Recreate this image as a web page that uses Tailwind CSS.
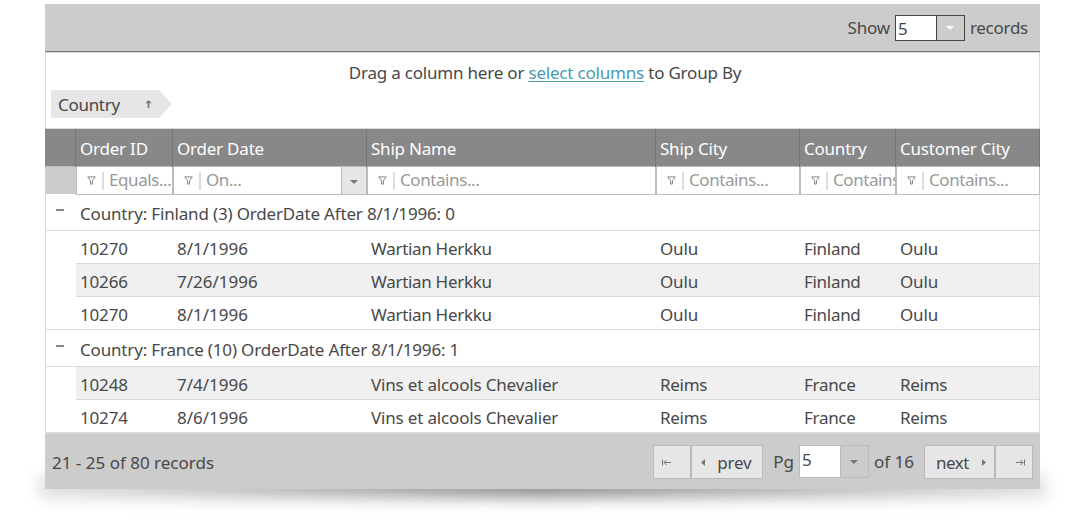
<!DOCTYPE html>
<html lang="en">
<head>
<meta charset="utf-8">
<title>Orders grid</title>
<script src="https://cdn.jsdelivr.net/npm/@tailwindcss/browser@4"></script>
</head>
<body class="w-[1080px] h-[520px] overflow-hidden bg-white font-['Noto_Sans','Open_Sans',sans-serif] text-[17px] leading-6 text-[#484848]">
<svg class="hidden">
  <symbol id="funnel" viewBox="0 0 10 9"><path d="M.8 .5H9.2L6 4.7V8.5H4V4.7Z" fill="none" stroke="#777" stroke-width="1"/></symbol>
  <symbol id="down" viewBox="0 0 8 4"><path d="M0 0H8L4 4Z" fill="currentColor"/></symbol>
</svg>
<div class="relative isolate ml-[45px] mt-1 w-[995px]">
  <div class="absolute -z-10 -left-[6px] -right-[6px] top-[472px] h-[21px] bg-[linear-gradient(to_right,rgb(0_0_0/0.13),rgb(0_0_0/0.24)_16%,rgb(0_0_0/0.48)_50%,rgb(0_0_0/0.24)_84%,rgb(0_0_0/0.13))] blur-[8px]"></div>

  <header class="flex h-12 items-center justify-end border-b border-[#777] bg-[#ccc] pr-3">
    <span class="mr-[5px] tracking-[-0.2px]">Show</span>
    <div class="mr-[5px] flex h-[26px] w-[70px] border border-[#444]">
      <span class="w-[41px] border-r border-[#444] bg-white pl-[2px] leading-[26px]">5</span>
      <span class="flex flex-1 items-center justify-center text-white"><svg class="h-1 w-2"><use href="#down"/></svg></span>
    </div>
    <span class="tracking-[-0.27px]">records</span>
  </header>

  <section class="h-[77px] border border-[#d9d9d9] bg-white">
    <p class="mt-2 pl-[5px] text-center tracking-[-0.2px]">Drag a column here or <a class="text-[#4a9bb0] underline underline-offset-2 decoration-1">select columns</a> to Group By</p>
    <div class="ml-[5px] mt-[5px] flex h-7 w-[121px] items-center bg-[#e6e6e6] pl-[7px] pt-px [clip-path:polygon(0_0,108px_0,100%_50%,108px_100%,0_100%)]">
      <span class="tracking-[-0.3px]">Country</span>
      <svg class="-mt-px ml-[25px] h-2 w-[7px]" viewBox="0 0 7 8"><path d="M3.5 0L6.7 3.2H4.3V8H2.7V3.2H.3Z" fill="#777"/></svg>
    </div>
  </section>

  <div class="grid h-[37px] grid-cols-[31px_97px_194px_289px_144px_96px_144px] bg-[#888] leading-[40px] tracking-[-0.22px] text-white *:border-r *:border-[#777] *:pl-1">
    <span></span><span>Order ID</span><span>Order Date</span><span>Ship Name</span><span>Ship City</span><span>Country</span><span>Customer City</span>
  </div>

  <div class="grid h-[29px] grid-cols-[31px_97px_194px_289px_144px_96px_144px] border-t border-[#bbb] bg-white leading-[26px] tracking-[-0.42px] text-[#999]">
    <span class="mb-px bg-[#ccc]"></span>
    <div class="flex items-center overflow-hidden border border-t-0 border-[#bbb] pl-2.5"><svg class="h-[9px] w-[9px] shrink-0"><use href="#funnel"/></svg><i class="ml-[6px] mr-[5px] h-[18px] w-0.5 shrink-0 bg-[#ddd]"></i><span class="-mt-0.5 whitespace-nowrap">Equals...</span></div>
    <div class="flex items-center overflow-hidden border border-t-0 border-[#bbb] pl-2.5"><svg class="h-[9px] w-[9px] shrink-0"><use href="#funnel"/></svg><i class="ml-[6px] mr-[5px] h-[18px] w-0.5 shrink-0 bg-[#ddd]"></i><span class="-mt-0.5">On...</span>
      <span class="ml-auto flex h-full w-[25px] items-center justify-center border-l border-[#bbb] bg-[#e6e6e6] pt-[3px] text-[#777]"><svg class="h-1 w-2"><use href="#down"/></svg></span></div>
    <div class="flex items-center overflow-hidden border border-t-0 border-[#bbb] pl-2.5"><svg class="h-[9px] w-[9px] shrink-0"><use href="#funnel"/></svg><i class="ml-[6px] mr-[5px] h-[18px] w-0.5 shrink-0 bg-[#ddd]"></i><span class="-mt-0.5">Contains...</span></div>
    <div class="flex items-center overflow-hidden border border-t-0 border-[#bbb] pl-2.5"><svg class="h-[9px] w-[9px] shrink-0"><use href="#funnel"/></svg><i class="ml-[6px] mr-[5px] h-[18px] w-0.5 shrink-0 bg-[#ddd]"></i><span class="-mt-0.5">Contains...</span></div>
    <div class="flex items-center overflow-hidden border border-t-0 border-[#bbb] pl-2.5"><svg class="h-[9px] w-[9px] shrink-0"><use href="#funnel"/></svg><i class="ml-[6px] mr-[5px] h-[18px] w-0.5 shrink-0 bg-[#ddd]"></i><span class="-mt-0.5">Contains...</span></div>
    <div class="flex items-center overflow-hidden border border-t-0 border-[#bbb] pl-2.5"><svg class="h-[9px] w-[9px] shrink-0"><use href="#funnel"/></svg><i class="ml-[6px] mr-[5px] h-[18px] w-0.5 shrink-0 bg-[#ddd]"></i><span class="-mt-0.5">Contains...</span></div>
  </div>

  <main class="border-x border-[#d9d9d9] bg-white tracking-[-0.17px]">
    <div class="flex h-9 border-b border-[#d9d9d9] leading-[38px]"><i class="ml-2.5 mr-4 mt-[14px] h-0.5 w-2 bg-[#888]"></i><span>Country: Finland (3) OrderDate After 8/1/1996: 0</span></div>
    <div class="ml-[30px] grid h-[33px] grid-cols-[97px_194px_289px_144px_96px_143px] border-b border-[#d9d9d9] leading-[36px] *:pl-1"><span>10270</span><span class="tracking-normal">8/1/1996</span><span class="tracking-[-0.3px]">Wartian Herkku</span><span>Oulu</span><span class="tracking-[-0.3px]">Finland</span><span>Oulu</span></div>
    <div class="ml-[30px] grid h-[33px] grid-cols-[97px_194px_289px_144px_96px_143px] border-b border-[#d9d9d9] bg-[#f0f0f0] leading-[36px] *:pl-1"><span>10266</span><span class="tracking-normal">7/26/1996</span><span class="tracking-[-0.3px]">Wartian Herkku</span><span>Oulu</span><span class="tracking-[-0.3px]">Finland</span><span>Oulu</span></div>
    <div class="border-b border-[#d9d9d9]"><div class="ml-[30px] grid h-8 grid-cols-[97px_194px_289px_144px_96px_143px] leading-[36px] *:pl-1"><span>10270</span><span class="tracking-normal">8/1/1996</span><span class="tracking-[-0.3px]">Wartian Herkku</span><span>Oulu</span><span class="tracking-[-0.3px]">Finland</span><span>Oulu</span></div></div>
    <div class="flex h-[37px] border-b border-[#d9d9d9] leading-[40px]"><i class="ml-2.5 mr-4 mt-[15px] h-0.5 w-2 bg-[#888]"></i><span>Country: France (10) OrderDate After 8/1/1996: 1</span></div>
    <div class="ml-[30px] grid h-[33px] grid-cols-[97px_194px_289px_144px_96px_143px] border-b border-[#d9d9d9] bg-[#f0f0f0] leading-[36px] *:pl-1"><span>10248</span><span class="tracking-normal">7/4/1996</span><span>Vins et alcools Chevalier</span><span class="tracking-[-0.3px]">Reims</span><span class="tracking-[-0.3px]">France</span><span class="tracking-[-0.3px]">Reims</span></div>
    <div class="border-b-2 border-[#d9d9d9]"><div class="ml-[30px] grid h-8 grid-cols-[97px_194px_289px_144px_96px_143px] leading-[36px] *:pl-1"><span>10274</span><span class="tracking-normal">8/6/1996</span><span>Vins et alcools Chevalier</span><span class="tracking-[-0.3px]">Reims</span><span class="tracking-[-0.3px]">France</span><span class="tracking-[-0.3px]">Reims</span></div></div>
  </main>

  <footer class="flex h-[55px] items-center bg-[#ccc] pl-[7px] pr-[7px]">
    <span class="mr-auto mt-0.5">21 - 25 of 80 records</span>
    <button class="flex h-[34px] w-[38px] items-center border border-[#bbb] bg-[#e6e6e6] pl-2"><svg class="mt-px h-[7px] w-[9px]" viewBox="0 0 9 7"><path d="M.5 .5V6.5M2 3.5H9M4.5 1L2 3.5L4.5 6" fill="none" stroke="#777"/></svg></button>
    <button class="flex h-[34px] w-[72px] items-center border border-[#bbb] bg-[#e6e6e6] pl-[9px]"><svg class="mr-3 mt-px h-[7px] w-1" viewBox="0 0 4 7"><path d="M4 0V7L0 3.5Z" fill="#777"/></svg><span class="mt-0.5 tracking-[-0.2px]">prev</span></button>
    <span class="ml-2.5 mr-[5px]">Pg</span>
    <div class="flex h-[33px] w-[70px] border border-[#bbb]"><span class="w-[41px] border-r border-[#bbb] bg-white pl-[2px] leading-7">5</span><span class="flex flex-1 items-center justify-center text-[#777]"><svg class="h-1 w-2"><use href="#down"/></svg></span></div>
    <span class="ml-[5px] mr-2.5">of 16</span>
    <button class="flex h-[34px] w-[71px] items-center border border-[#bbb] bg-[#e6e6e6] pl-[11px]"><span class="mt-0.5 tracking-[-0.5px]">next</span><svg class="ml-[13px] mt-px h-[7px] w-1" viewBox="0 0 4 7"><path d="M0 0L4 3.5L0 7Z" fill="#777"/></svg></button>
    <button class="flex h-[34px] w-[38px] items-center justify-end border border-[#bbb] bg-[#e6e6e6] pr-[7px]"><svg class="mt-px h-[7px] w-[9px]" viewBox="0 0 9 7"><path d="M8.5 .5V6.5M0 3.5H7M4.5 1L7 3.5L4.5 6" fill="none" stroke="#777"/></svg></button>
  </footer>
</div>
</body>
</html>
